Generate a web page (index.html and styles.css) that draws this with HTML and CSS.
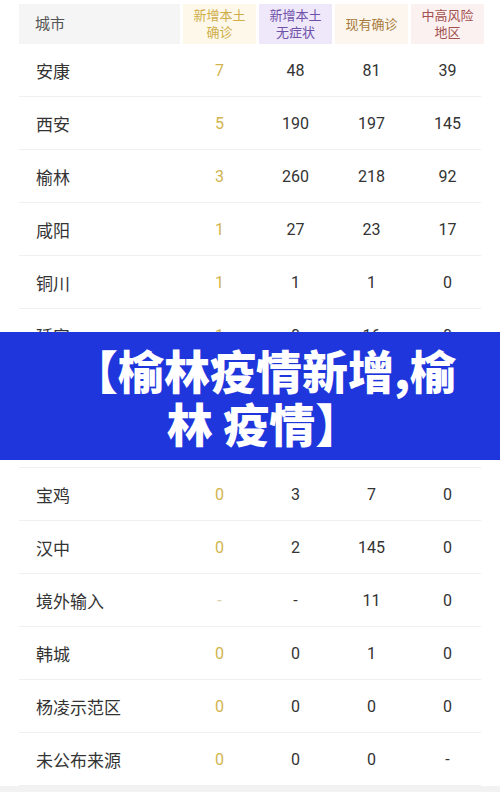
FILE: index.html
```html
<!DOCTYPE html>
<html lang="zh-CN">
<head>
    <meta charset="UTF-8">
    <meta name="viewport" content="width=device-width, initial-scale=1.0">
    <title>陕西疫情数据</title>
    <link rel="stylesheet" href="styles.css">
</head>
<body>
    <div class="page">
        <div class="table">
            <div class="row head">
                <div class="cell city">城市</div>
                <div class="cell h-new">新增本土<br>确诊</div>
                <div class="cell h-asym">新增本土<br>无症状</div>
                <div class="cell h-now">现有确诊</div>
                <div class="cell h-risk">中高风险<br>地区</div>
            </div>
            <div class="row"><div class="cell city">安康</div><div class="cell num gold">7</div><div class="cell num">48</div><div class="cell num">81</div><div class="cell num">39</div></div>
            <div class="row"><div class="cell city">西安</div><div class="cell num gold">5</div><div class="cell num">190</div><div class="cell num">197</div><div class="cell num">145</div></div>
            <div class="row"><div class="cell city">榆林</div><div class="cell num gold">3</div><div class="cell num">260</div><div class="cell num">218</div><div class="cell num">92</div></div>
            <div class="row"><div class="cell city">咸阳</div><div class="cell num gold">1</div><div class="cell num">27</div><div class="cell num">23</div><div class="cell num">17</div></div>
            <div class="row"><div class="cell city">铜川</div><div class="cell num gold">1</div><div class="cell num">1</div><div class="cell num">1</div><div class="cell num">0</div></div>
            <div class="row"><div class="cell city">延安</div><div class="cell num gold">1</div><div class="cell num">0</div><div class="cell num">16</div><div class="cell num">0</div></div>
            <!-- rows hidden under the banner -->
            <div class="row"></div>
            <div class="row"></div>
            <div class="row"><div class="cell city">宝鸡</div><div class="cell num gold">0</div><div class="cell num">3</div><div class="cell num">7</div><div class="cell num">0</div></div>
            <div class="row"><div class="cell city">汉中</div><div class="cell num gold">0</div><div class="cell num">2</div><div class="cell num">145</div><div class="cell num">0</div></div>
            <div class="row"><div class="cell city">境外输入</div><div class="cell num gold faint">-</div><div class="cell num">-</div><div class="cell num">11</div><div class="cell num">0</div></div>
            <div class="row"><div class="cell city">韩城</div><div class="cell num gold">0</div><div class="cell num">0</div><div class="cell num">1</div><div class="cell num">0</div></div>
            <div class="row"><div class="cell city">杨凌示范区</div><div class="cell num gold">0</div><div class="cell num">0</div><div class="cell num">0</div><div class="cell num">0</div></div>
            <div class="row"><div class="cell city">未公布来源</div><div class="cell num gold">0</div><div class="cell num">0</div><div class="cell num">0</div><div class="cell num">-</div></div>
        </div>
        <div class="bottom-strip"></div>

        <div class="banner">
            <h1>【榆林疫情新增,榆林 疫情】</h1>
        </div>
    </div>
</body>
</html>
```

FILE: styles.css
```css
body {
    margin: 0;
    background: #fff;
    font-family: Roboto, "Noto Sans CJK SC", sans-serif;
    color: #333;
}

.page {
    position: relative;
    width: 500px;
    height: 792px;
    overflow: hidden;
}

.table {
    padding: 4px 19px 0 19px;
}

.row {
    display: grid;
    grid-template-columns: 160px repeat(4, 73px);
    column-gap: 3px;
    padding-left: 1px;
    height: 53px;
    box-sizing: border-box;
    border-bottom: 1px solid #f0f0f0;
    align-items: center;
}

.row.head {
    height: 40px;
    border-bottom: none;
    align-items: stretch;
    background: linear-gradient(to right, #f5f5f5 161px, transparent 161px);
    padding-left: 0;
    grid-template-columns: 161px repeat(4, 73px);
}

.cell {
    text-align: center;
}

.cell.city {
    text-align: left;
    padding-left: 16px;
    font-size: 17px;
    color: #333;
}

.head .cell {
    display: flex;
    align-items: center;
    justify-content: center;
    font-size: 13px;
    line-height: 17px;
}

.head .cell.city {
    justify-content: flex-start;
    font-size: 15px;
    color: #555;
}

.h-new {
    background: #fdf8e9;
    color: #cfae48;
}

.h-asym {
    background: #efe8fb;
    color: #6f52a8;
}

.h-now {
    background: #fcf6ee;
    color: #a87a3c;
}

.h-risk {
    background: #fbf1f1;
    color: #a3504e;
}

.num {
    font-size: 16px;
}

.gold {
    color: #d2b44e;
}

.faint {
    color: #d9d0a8;
}

.bottom-strip {
    height: 8px;
    background: #f2f2f2;
}

.banner {
    position: absolute;
    left: 0;
    top: 332px;
    width: 500px;
    height: 128px;
    background: #1f36dc;
    box-sizing: border-box;
    padding: 11px 32px 0 60px;
}

.banner h1 {
    margin: 0;
    color: #fff;
    font-family: "Noto Sans CJK SC", sans-serif;
    font-weight: 900;
    font-size: 46px;
    line-height: 53px;
    text-align: center;
}
```
